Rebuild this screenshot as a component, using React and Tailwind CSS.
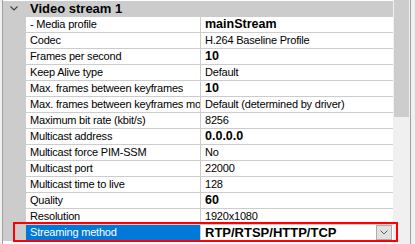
import React from "react";

const rows = [
  ["- Media profile", "mainStream", true],
  ["Codec", "H.264 Baseline Profile", false],
  ["Frames per second", "10", true],
  ["Keep Alive type", "Default", false],
  ["Max. frames between keyframes", "10", true],
  ["Max. frames between keyframes mode", "Default (determined by driver)", false],
  ["Maximum bit rate (kbit/s)", "8256", false],
  ["Multicast address", "0.0.0.0", true],
  ["Multicast force PIM-SSM", "No", false],
  ["Multicast port", "22000", false],
  ["Multicast time to live", "128", false],
  ["Quality", "60", true],
  ["Resolution", "1920x1080", false],
];

export default function App() {
  return (
    <div
      className="relative w-[415px] h-[244px] overflow-hidden bg-[#f0f0f0] flex text-[11px] tracking-[-0.2px] text-black"
      style={{ fontFamily: '"Liberation Sans", Arial, sans-serif' }}
    >
      <div className="w-[2px] shrink-0" />
      {/* grid */}
      <div className="w-[391px] shrink-0 pt-[1px] bg-white border-l border-[#a0a0a0] flex flex-col">
        {/* category header */}
        <div className="h-[16px] shrink-0 bg-[#cccccc] flex items-center border-b border-[#cccccc]">
          <div className="w-[23px] shrink-0 flex items-center justify-center">
            <svg width="8" height="5" viewBox="0 0 8 5" className="ml-[-2px]">
              <path d="M0.5 0.5 L4 4 L7.5 0.5" fill="none" stroke="#404040" strokeWidth="1.1" />
            </svg>
          </div>
          <span className="pl-[4px] font-bold text-[13px] tracking-normal leading-none">Video stream 1</span>
        </div>
        {rows.map(([label, value, bold]) => (
          <div key={label} className="h-[16px] shrink-0 flex border-b border-[#cccccc]">
            <div className="w-[23px] shrink-0 bg-[#cccccc]" />
            <div className="w-[175px] shrink-0 border-r border-[#cccccc] pl-[4px] flex items-center overflow-hidden whitespace-nowrap leading-none">
              {label}
            </div>
            <div
              className={
                "flex-1 pl-[4px] flex items-center overflow-hidden whitespace-nowrap leading-none " +
                (bold ? "font-bold text-[12.5px] tracking-normal" : "")
              }
            >
              {value}
            </div>
          </div>
        ))}
        {/* selected row */}
        <div className="h-[16px] shrink-0 flex border-b border-[#cccccc]">
          <div className="w-[23px] shrink-0 bg-[#cccccc]" />
          <div className="w-[175px] shrink-0 border-r border-[#cccccc] pl-[4px] flex items-center bg-[#0078d7] text-white leading-none">
            Streaming method
          </div>
          <div className="flex-1 pl-[4px] flex items-center justify-between leading-none">
            <span className="font-bold text-[13px] tracking-normal">RTP/RTSP/HTTP/TCP</span>
            <div className="w-[16px] h-[15px] mr-[1px] bg-[#e1e1e1] border border-[#adadad] flex items-center justify-center">
              <svg width="8" height="5" viewBox="0 0 8 5">
                <path d="M0.5 0.5 L4 4 L7.5 0.5" fill="none" stroke="#606060" strokeWidth="1" />
              </svg>
            </div>
          </div>
        </div>
      </div>
      {/* scrollbar */}
      <div className="w-[17px] shrink-0 bg-[#f0f0f0] flex flex-col pl-[1px] pr-[1px]">
        <div className="h-[117px] bg-[#cdcdcd]" />
      </div>
      <div className="w-[1px] shrink-0 bg-[#a0a0a0]" />
      <div className="flex-1 bg-[#f0f0f0]" />
      {/* highlight box */}
      <div className="absolute left-[13px] top-[222px] w-[385px] h-[20px] border-2 border-[#ff0000]" />
    </div>
  );
}
